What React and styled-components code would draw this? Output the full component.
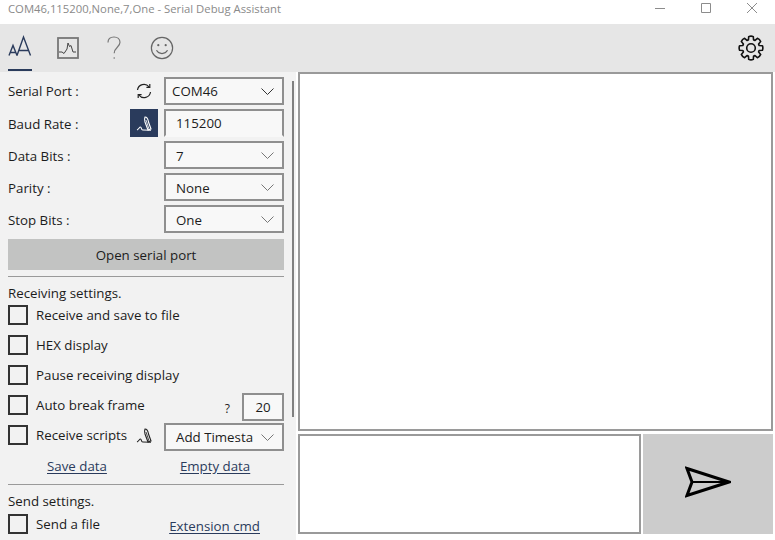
import React from "react";
import styled, { createGlobalStyle } from "styled-components";

const GlobalStyle = createGlobalStyle`
html, body { margin: 0; padding: 0; background: #fff; overflow: hidden; }
* { box-sizing: border-box; }
body { font-family: "Open Sans", "Noto Sans", sans-serif; font-size: 13.3px; color: #1c1c1c; }
`;

const Win = styled.div`
width: 775px;
height: 540px;
display: flex;
flex-direction: column;
overflow: hidden;
background: #fff;
`;

const TitleBar = styled.div`
height: 24px;
flex: none;
display: flex;
align-items: center;
justify-content: space-between;
padding: 0 18px 8px 8px;
color: #8a8a8a;
font-size: 11.3px;
background: #fff;
`;

const WinControls = styled.div`
display: flex;
gap: 36px;
align-items: center;
color: #8c8c8c;
svg { display: block; }
`;

const Toolbar = styled.div`
height: 48px;
flex: none;
background: #e6e6e6;
display: flex;
align-items: center;
justify-content: space-between;
padding: 0 11px 0 8px;
`;

const Tabs = styled.div`
display: flex;
align-items: center;
gap: 24px;
`;

const Tab = styled.div`
width: 24px;
height: 46px;
margin-left: ${(p) => p.$ml || 0}px;
display: flex;
align-items: center;
justify-content: center;
`;

const ActiveTab = styled(Tab)`
border-bottom: 2px solid #2a3b5c;
color: #2a3b5c;
`;

const Body = styled.div`
flex: 1;
display: flex;
min-height: 0;
`;

const Sidebar = styled.div`
width: 296px;
flex: none;
display: flex;
background: #f2f2f2;
`;

const SideContent = styled.div`
width: 292px;
flex: none;
padding: 5px 0 0 8px;
display: flex;
flex-direction: column;
`;

const Rail = styled.div`
width: 2px;
height: 336px;
margin-top: 9px;
background: #808080;
`;

const FormRow = styled.div`
width: 276px;
height: 28px;
flex: none;
margin-bottom: 4px;
display: flex;
align-items: center;
`;

const RowLabel = styled.span`
flex: 1;
margin-top: ${(p) => (p.$low ? 2 : 0)}px;
`;

const IconSlot = styled.div`
width: 28px;
height: 28px;
margin-right: 6px;
display: flex;
align-items: center;
justify-content: center;
background: ${(p) => (p.$dark ? "#2a3b5c" : "transparent")};
color: ${(p) => (p.$dark ? "#fff" : "#222")};
`;

const Combo = styled.div`
width: 120px;
height: 28px;
flex: none;
border: 2px solid #8f8f8f;
border-bottom-color: ${(p) => (p.$open ? "transparent" : "#8f8f8f")};
background: #f8f8f8;
display: flex;
align-items: center;
justify-content: space-between;
padding: 0 8px 0 ${(p) => p.$pl || 10}px;
margin-top: ${(p) => p.$mt || 0}px;
white-space: nowrap;
overflow: hidden;
`;

const ComboValue = styled.span`
margin-top: 2px;
`;

const PrimaryButton = styled.div`
width: 276px;
height: 31px;
flex: none;
margin-top: 2px;
background: #c2c3c2;
display: flex;
align-items: center;
justify-content: center;
`;

const Divider = styled.div`
width: 276px;
height: 1px;
background: #9a9a9a;
flex: none;
margin: ${(p) => p.$m};
`;

const SectionTitle = styled.div`
height: 20px;
flex: none;
margin-bottom: ${(p) => p.$mb}px;
line-height: 20px;
`;

const CheckRow = styled.div`
width: 276px;
height: 20px;
flex: none;
margin-bottom: 10px;
display: flex;
align-items: center;
`;

const Box = styled.div`
width: 20px;
height: 20px;
flex: none;
border: 2px solid #333;
margin-right: 8px;
`;

const CheckText = styled.span`
flex: 1;
`;

const Mini = styled.span`
font-size: 12px;
margin: 6px 12px 0 0;
`;

const SmallInput = styled.div`
width: 42px;
height: 28px;
flex: none;
margin-top: 4px;
border: 2px solid #8f8f8f;
background: #f8f8f8;
display: flex;
align-items: center;
justify-content: center;
`;

const LinkRow = styled.div`
width: 276px;
height: 20px;
flex: none;
margin-top: 1px;
display: flex;
align-items: center;
padding-left: ${(p) => p.$pl}px;
gap: ${(p) => p.$gap}px;
`;

const TextLink = styled.span`
color: #2a3b5c;
text-decoration: underline;
text-underline-offset: 2px;
margin: ${(p) => p.$m || 0};
`;

const Main = styled.div`
flex: 1;
display: flex;
flex-direction: column;
gap: 3px;
padding: 0 2px;
`;

const ReceiveBox = styled.div`
height: 359px;
flex: none;
border: 2px solid #9a9a9a;
background: #fff;
`;

const SendArea = styled.div`
height: 100px;
flex: none;
display: flex;
gap: 2px;
`;

const SendInput = styled.div`
flex: 1;
border: 2px solid #9a9a9a;
background: #fff;
`;

const SendButton = styled.div`
width: 130px;
padding-bottom: 4px;
background: #cccccc;
display: flex;
align-items: center;
justify-content: center;
`;

const Chevron = ({ dark }) => (
  <svg width="13" height="7" viewBox="0 0 13 7" fill="none" stroke={dark ? "#333" : "#777"} strokeWidth="1">
    <path d="M.5.5 6.500 6.500 12.500.5" />
  </svg>
);

const Pen = () => (
  <svg width="20" height="20" viewBox="0 0 20 20" fill="none" stroke="currentColor" strokeWidth="1.100">
    <path d="M11 4c2 0 3 2 3.500 5l2.500 7-3 1-3-8c-.5-2-.5-4 0-5Z" />
    <path d="M12 7l3 9" strokeWidth=".8" />
    <path d="M3 17c1.500-.5 2.500-3 3.500-3 1.200 0 .5 3.500 2.500 3l8 .2" />
  </svg>
);

const Refresh = () => (
  <svg width="16" height="16" viewBox="0 0 16 16" fill="none" stroke="#222" strokeWidth="1.200">
    <path d="M1.500 7A6.500 6.500 0 0 1 13 3.800" />
    <path d="M14.500 9A6.500 6.500 0 0 1 3 12.200" />
    <path d="M13.800 1v3.400h-3.400" />
    <path d="M2.200 15v-3.400h3.400" />
  </svg>
);

const FontIcon = () => (
  <svg width="24" height="26" viewBox="0 0 24 26" fill="none" stroke="currentColor" strokeWidth="1.400">
    <path d="M1 21.500 5 11.500 9 21.500M2.300 18.500h5.500" />
    <path d="M9 21.500 15.500 3 22.500 21.500M11 16.500h9.500" />
  </svg>
);

const ChartIcon = () => (
  <svg width="22" height="22" viewBox="0 0 22 22" fill="none" stroke="#777">
    <rect x="1" y="1" width="20" height="20" strokeWidth="1.800" />
    <path d="M2 15h3l2 1.500 3-4.500 1-6 1.500 3.500 1.500-1 2 6.500h3" stroke="#444" strokeWidth="1" />
  </svg>
);

const QuestionIcon = () => (
  <svg width="14" height="24" viewBox="0 0 14 24" fill="none" stroke="#777" strokeWidth="1.200">
    <path d="M1 6.500C1 3 3.500 1 7 1s6 2.300 6 5.300c0 5-5.800 5-5.800 11" />
    <circle cx="7.200" cy="22" r=".8" fill="#777" stroke="none" />
  </svg>
);

const SmileIcon = () => (
  <svg width="26" height="26" viewBox="0 0 26 26" fill="none" stroke="#666" strokeWidth="1.300">
    <circle cx="13" cy="13" r="11.500" />
    <circle cx="9" cy="10" r="1.200" fill="#666" stroke="none" />
    <circle cx="17" cy="10" r="1.200" fill="#666" stroke="none" />
    <path d="M7 15.500c1.500 2.500 3.500 3.500 6 3.500s4.500-1 6-3.500" />
  </svg>
);

// eight teeth, outline only
const gearPath = () => {
  const pts = [];
  for (let i = 0; i < 8; i++) {
    const a = (i * Math.PI) / 4 - Math.PI / 2;
    const at = (r, d) => `${(13 + r * Math.cos(a + d)).toFixed(2)} ${(13 + r * Math.sin(a + d)).toFixed(2)}`;
    pts.push(`${i ? "L" : "M"}${at(8.6, -0.3)} L${at(11.6, -0.2)} Q${at(12.4, 0)} ${at(11.6, 0.2)} L${at(8.6, 0.3)} Q${at(8.4, 0.39)} ${at(8.6, 0.485)}`);
  }
  return pts.join(" ") + "Z";
};

const GearIcon = () => (
  <svg width="26" height="26" viewBox="0 0 26 26" fill="none" stroke="#111" strokeWidth="1.600">
    <path d={gearPath()} strokeLinejoin="round" />
    <circle cx="13" cy="13" r="4.300" />
  </svg>
);

const SendIcon = () => (
  <svg width="46" height="32" viewBox="0 0 46 32" fill="none" stroke="#000" strokeWidth="3">
    <path d="M2 2.500 44 16 2 29.500 7 16Z" strokeLinejoin="miter" />
    <path d="M7 16h37" strokeWidth="2" />
  </svg>
);

const fields = [
  { label: "Data Bits :", value: "7" },
  { label: "Parity :", value: "None" },
  { label: "Stop Bits :", value: "One" },
];

const checks = ["Receive and save to file", "HEX display", "Pause receiving display"];

export default function App() {
  return (
    <Win>
      <GlobalStyle />
      <TitleBar>
        <span>COM46,115200,None,7,One - Serial Debug Assistant</span>
        <WinControls>
          <svg width="10" height="10" viewBox="0 0 10 10" stroke="currentColor"><path d="M0 5.500h10" /></svg>
          <svg width="10" height="10" viewBox="0 0 10 10" fill="none" stroke="currentColor"><path d="M.5.5h9v9h-9z" /></svg>
          <svg width="10" height="10" viewBox="0 0 10 10" stroke="currentColor"><path d="M0 0l10 10M10 0 0 10" /></svg>
        </WinControls>
      </TitleBar>
      <Toolbar>
        <Tabs>
          <ActiveTab><FontIcon /></ActiveTab>
          <Tab><ChartIcon /></Tab>
          <Tab $ml={-2}><QuestionIcon /></Tab>
          <Tab><SmileIcon /></Tab>
        </Tabs>
        <GearIcon />
      </Toolbar>
      <Body>
        <Sidebar>
          <SideContent>
            <FormRow>
              <RowLabel>Serial Port :</RowLabel>
              <IconSlot><Refresh /></IconSlot>
              <Combo $pl={6}>COM46<Chevron dark /></Combo>
            </FormRow>
            <FormRow>
              <RowLabel $low>Baud Rate :</RowLabel>
              <IconSlot $dark><Pen /></IconSlot>
              <Combo $open>115200</Combo>
            </FormRow>
            {fields.map((f) => (
              <FormRow key={f.label}>
                <RowLabel $low>{f.label}</RowLabel>
                <Combo><ComboValue>{f.value}</ComboValue><Chevron /></Combo>
              </FormRow>
            ))}
            <PrimaryButton>Open serial port</PrimaryButton>
            <Divider $m="6px 0 6px" />
            <SectionTitle $mb={2}>Receiving settings.</SectionTitle>
            {checks.map((c) => (
              <CheckRow key={c}>
                <Box />
                <CheckText>{c}</CheckText>
              </CheckRow>
            ))}
            <CheckRow>
              <Box />
              <CheckText>Auto break frame</CheckText>
              <Mini>?</Mini>
              <SmallInput>20</SmallInput>
            </CheckRow>
            <CheckRow>
              <Box />
              <CheckText>Receive scripts</CheckText>
              <IconSlot><Pen /></IconSlot>
              <Combo $mt={4}>Add Timesta<Chevron /></Combo>
            </CheckRow>
            <LinkRow $pl={39} $gap={73}>
              <TextLink>Save data</TextLink>
              <TextLink>Empty data</TextLink>
            </LinkRow>
            <Divider $m="8px 0 6px" />
            <SectionTitle $mb={3}>Send settings.</SectionTitle>
            <CheckRow>
              <Box />
              <CheckText>Send a file</CheckText>
              <TextLink $m="4px 24px 0 0">Extension cmd</TextLink>
            </CheckRow>
          </SideContent>
          <Rail />
        </Sidebar>
        <Main>
          <ReceiveBox />
          <SendArea>
            <SendInput />
            <SendButton><SendIcon /></SendButton>
          </SendArea>
        </Main>
      </Body>
    </Win>
  );
}
